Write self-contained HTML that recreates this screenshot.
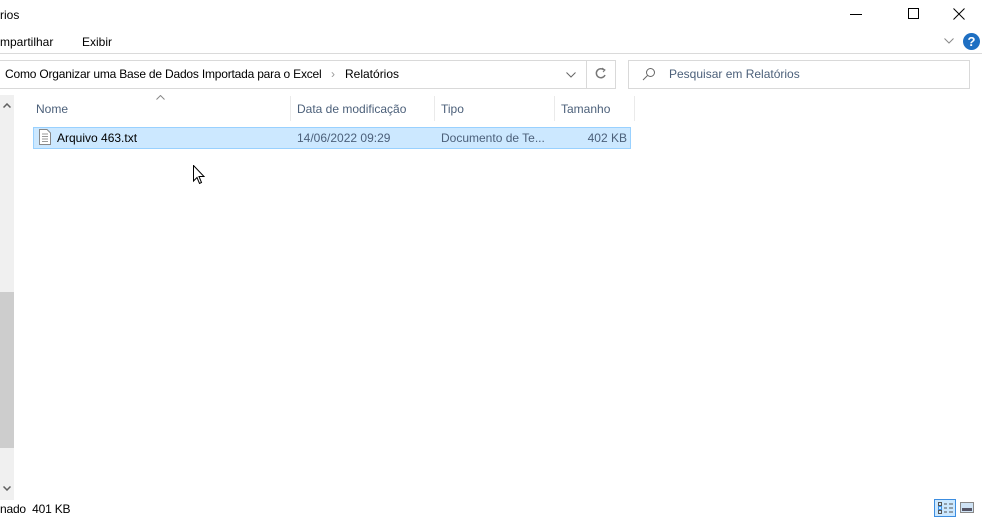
<!DOCTYPE html>
<html><head><meta charset="utf-8"><style>
*{margin:0;padding:0;box-sizing:border-box}
body{width:982px;height:517px;background:#fff;font-family:"Liberation Sans",sans-serif;font-size:12px;color:#000;position:relative;overflow:hidden}
.a{position:absolute;white-space:nowrap}
.g{color:#4c607a}
</style></head><body>
<div class="a" style="left:0;top:8px">rios</div>
<div class="a" style="left:850px;top:14px;width:12px;height:1px;background:#000"></div>
<div class="a" style="left:908px;top:8px;width:11px;height:11px;border:1px solid #000"></div>
<svg class="a" style="left:953px;top:8px" width="12" height="12"><path d="M0.5 0.5L11.5 11.5M11.5 0.5L0.5 11.5" stroke="#000"/></svg>
<div class="a" style="left:0;top:35px">mpartilhar</div>
<div class="a" style="left:82px;top:35px">Exibir</div>
<svg class="a" style="left:944px;top:38px" width="10" height="6"><path d="M0.5 0.5L5 5L9.5 0.5" stroke="#888" fill="none"/></svg>
<div class="a" style="left:963px;top:33px;width:17px;height:17px;border-radius:50%;background:#1e6fc2;color:#fff;font-weight:bold;font-size:13px;text-align:center;line-height:17px">?</div>
<div class="a" style="left:0;top:53px;width:982px;height:1px;background:#dadada"></div>
<div class="a" style="left:-1px;top:60px;width:588px;height:29px;border:1px solid #d9d9d9"></div>
<div class="a" style="left:586px;top:60px;width:30px;height:29px;border:1px solid #d9d9d9"></div>
<div class="a" style="left:5px;top:67px;letter-spacing:-0.2px">Como Organizar uma Base de Dados Importada para o Excel</div>
<div class="a" style="left:331px;top:67px;color:#999">›</div>
<div class="a" style="left:345px;top:67px">Relatórios</div>
<svg class="a" style="left:566px;top:72px" width="10" height="6"><path d="M0.5 0.5L5 5L9.5 0.5" stroke="#666" fill="none"/></svg>
<svg class="a" style="left:595px;top:67px" width="12" height="13"><path d="M9 3A4.5 4.5 0 1 0 10 8" stroke="#777" stroke-width="1.5" fill="none"/><path d="M7 1L10 3L8 5" stroke="#777" fill="none"/></svg>
<div class="a" style="left:628px;top:60px;width:342px;height:29px;border:1px solid #d9d9d9"></div>
<svg class="a" style="left:642px;top:67px" width="14" height="14"><circle cx="8.5" cy="5.5" r="4" stroke="#666" fill="none"/><path d="M5.5 8.5L1 13" stroke="#666"/></svg>
<div class="a g" style="left:669px;top:67px">Pesquisar em Relatórios</div>
<div class="a" style="left:0;top:95px;width:14px;height:405px;background:#f0f0f0"></div>
<div class="a" style="left:0;top:292px;width:14px;height:156px;background:#cdcdcd"></div>
<svg class="a" style="left:3px;top:103px" width="8" height="5"><path d="M0.5 4.5L4 1L7.5 4.5" stroke="#606060" stroke-width="1.5" fill="none"/></svg>
<svg class="a" style="left:3px;top:486px" width="8" height="5"><path d="M0.5 0.5L4 4L7.5 0.5" stroke="#606060" stroke-width="1.5" fill="none"/></svg>
<svg class="a" style="left:156px;top:95px" width="9" height="5"><path d="M0.5 4.5L4.5 0.5L8.5 4.5" stroke="#888" fill="none"/></svg>
<div class="a g" style="left:36px;top:102px">Nome</div>
<div class="a" style="left:290px;top:96px;width:1px;height:25px;background:#eaeaea"></div>
<div class="a g" style="left:297px;top:102px">Data de modificação</div>
<div class="a" style="left:434px;top:96px;width:1px;height:25px;background:#eaeaea"></div>
<div class="a g" style="left:441px;top:102px">Tipo</div>
<div class="a" style="left:554px;top:96px;width:1px;height:25px;background:#eaeaea"></div>
<div class="a g" style="left:561px;top:102px">Tamanho</div>
<div class="a" style="left:634px;top:96px;width:1px;height:25px;background:#eaeaea"></div>
<div class="a" style="left:33px;top:127px;width:598px;height:22px;background:#cce8ff;border:1px solid #99d1ff"></div>
<svg class="a" style="left:39px;top:129px" width="12" height="16"><path d="M0.5 0.5H8L11.5 4V15.5H0.5Z" fill="#fff" stroke="#888"/><path d="M3 5H9M3 7.5H9M3 10H9M3 12.5H9" stroke="#999"/></svg>
<div class="a" style="left:57px;top:131px">Arquivo 463.txt</div>
<div class="a g" style="left:297px;top:131px">14/06/2022 09:29</div>
<div class="a g" style="left:441px;top:131px">Documento de Te...</div>
<div class="a g" style="right:355px;top:131px">402 KB</div>
<svg class="a" style="left:193px;top:165px" width="13" height="20"><path d="M0.5 0.5V16L4 12.5L6.5 18.5L8.5 17.5L6 11.5H11Z" fill="#fff" stroke="#000"/></svg>
<div class="a" style="left:0;top:502px;letter-spacing:-0.2px">nado&nbsp; 401 KB</div>
<div class="a" style="left:934px;top:499px;width:22px;height:18px;background:#cce8ff;border:1px solid #3c8de0"></div>
<svg class="a" style="left:938px;top:502px" width="16" height="12"><rect x="0.5" y="0.5" width="3" height="3" fill="none" stroke="#555"/><rect x="0.5" y="4.5" width="3" height="3" fill="none" stroke="#3c8de0"/><rect x="0.5" y="8.5" width="3" height="3" fill="none" stroke="#555"/><path d="M6 2H9M11 2H15M6 6H9M11 6H15M6 10H9M11 10H15" stroke="#555"/></svg>
<svg class="a" style="left:960px;top:502px" width="14" height="11"><rect x="0.5" y="0.5" width="13" height="10" fill="#cfe3f5" stroke="#888"/><rect x="2" y="6" width="10" height="3" fill="#556"/></svg>
</body></html>
